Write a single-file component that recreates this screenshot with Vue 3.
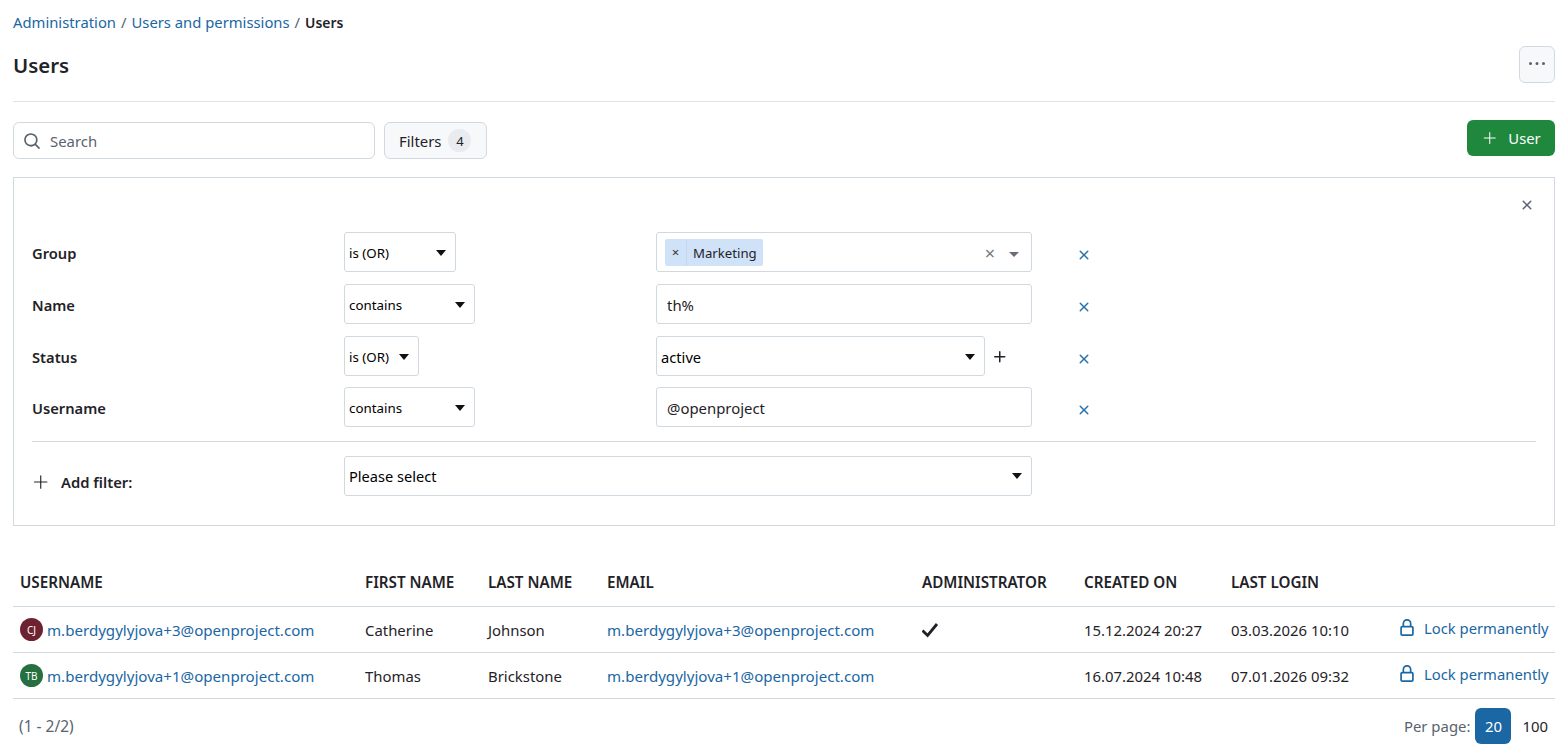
<script setup>
const filters = [
  { label: 'Group', op: 'is (OR)', opWidth: 112 },
  { label: 'Name', op: 'contains', opWidth: 131, text: 'th%' },
  { label: 'Status', op: 'is (OR)', opWidth: 75 },
  { label: 'Username', op: 'contains', opWidth: 131, text: '@openproject' }
]

const columns = [
  { title: 'Username', width: 345 },
  { title: 'First name', width: 123 },
  { title: 'Last name', width: 119 },
  { title: 'Email', width: 315 },
  { title: 'Administrator', width: 162 },
  { title: 'Created on', width: 147 },
  { title: 'Last login', width: 167 },
  { title: '', width: 164 }
]

const users = [
  {
    initials: 'CJ',
    color: '#6e2131',
    login: 'm.berdygylyjova+3@openproject.com',
    first: 'Catherine',
    last: 'Johnson',
    admin: true,
    created: '15.12.2024 20:27',
    lastLogin: '03.03.2026 10:10'
  },
  {
    initials: 'TB',
    color: '#26703f',
    login: 'm.berdygylyjova+1@openproject.com',
    first: 'Thomas',
    last: 'Brickstone',
    admin: false,
    created: '16.07.2024 10:48',
    lastLogin: '07.01.2026 09:32'
  }
]

const plusPath = 'M7.75 2a.75.75 0 0 1 .75.75V7h4.25a.75.75 0 0 1 0 1.5H8.5v4.25a.75.75 0 0 1-1.5 0V8.5H2.75a.75.75 0 0 1 0-1.5H7V2.75A.75.75 0 0 1 7.75 2Z'
const thinPlusPath = 'M7.75 2a.5.5 0 0 1 .5.5v5h5a.5.5 0 0 1 0 1h-5v5a.5.5 0 0 1-1 0v-5h-5a.5.5 0 0 1 0-1h5v-5a.5.5 0 0 1 .5-.5Z'
const closePath = 'M3.72 3.72a.75.75 0 0 1 1.06 0L8 6.94l3.22-3.22a.749.749 0 0 1 1.275.326.749.749 0 0 1-.215.734L9.06 8l3.22 3.22a.749.749 0 0 1-.326 1.275.749.749 0 0 1-.734-.215L8 9.06l-3.22 3.22a.751.751 0 0 1-1.042-.018.751.751 0 0 1-.018-1.042L6.94 8 3.72 4.78a.75.75 0 0 1 0-1.06Z'
const lockPath = 'M4 4a4 4 0 0 1 8 0v2h.25c.966 0 1.75.784 1.75 1.75v5.5A1.75 1.75 0 0 1 12.25 15h-8.5A1.75 1.75 0 0 1 2 13.25v-5.5C2 6.784 2.784 6 3.75 6H4Zm8.25 3.5h-8.5a.25.25 0 0 0-.25.25v5.5c0 .138.112.25.25.25h8.5a.25.25 0 0 0 .25-.25v-5.5a.25.25 0 0 0-.25-.25ZM10.5 6V4a2.5 2.5 0 1 0-5 0v2Z'
</script>

<template>
  <div class="page">
    <nav class="breadcrumb">
      <a href="#">Administration</a>
      <span class="sep">/</span>
      <a href="#">Users and permissions</a>
      <span class="sep">/</span>
      <strong>Users</strong>
    </nav>

    <header class="title-row">
      <h1>Users</h1>
      <button class="more-btn" aria-label="More">
        <svg width="16" height="16" viewBox="0 0 16 16"><path fill="currentColor" d="M8 9a1.5 1.5 0 1 0 0-3 1.5 1.5 0 0 0 0 3ZM1.5 9a1.5 1.5 0 1 0 0-3 1.5 1.5 0 0 0 0 3Zm13 0a1.5 1.5 0 1 0 0-3 1.5 1.5 0 0 0 0 3Z" /></svg>
      </button>
    </header>

    <div class="toolbar">
      <label class="search">
        <svg width="18" height="18" viewBox="0 0 16 16"><path fill="currentColor" d="M10.68 11.74a6 6 0 0 1-7.922-8.982 6 6 0 0 1 8.982 7.922l3.04 3.04a.749.749 0 0 1-.326 1.275.749.749 0 0 1-.734-.215ZM11.5 7a4.499 4.499 0 1 0-8.997 0A4.499 4.499 0 0 0 11.5 7Z" /></svg>
        <input type="text" placeholder="Search" />
      </label>
      <button class="filters-btn">Filters <span class="counter">4</span></button>
      <button class="add-btn">
        <svg width="16" height="16" viewBox="0 0 16 16"><path fill="currentColor" :d="thinPlusPath" /></svg>
        User
      </button>
    </div>

    <section class="filter-box">
      <button class="box-close" aria-label="Close">
        <svg width="16" height="16" viewBox="0 0 16 16"><path fill="currentColor" :d="closePath" /></svg>
      </button>

      <div v-for="filter in filters" :key="filter.label" class="filter-row">
        <label class="filter-label">{{ filter.label }}</label>
        <div class="select small" :style="{ width: filter.opWidth + 'px' }">
          <span>{{ filter.op }}</span><i class="arrow"></i>
        </div>

        <div class="filter-value">
          <div v-if="filter.label === 'Group'" class="multi">
            <span class="tag"><span class="tag-x">×</span><span class="tag-text">Marketing</span></span>
            <span class="multi-clear">×</span>
            <i class="multi-arrow"></i>
          </div>
          <template v-else-if="filter.label === 'Status'">
            <div class="select status-select"><span>active</span><i class="arrow"></i></div>
            <svg class="status-plus" width="16" height="16" viewBox="0 0 16 16"><path fill="currentColor" :d="plusPath" /></svg>
          </template>
          <input v-else class="text-input" type="text" :value="filter.text" />
        </div>

        <button class="row-remove" aria-label="Remove filter">
          <svg width="16" height="16" viewBox="0 0 16 16"><path fill="currentColor" :d="closePath" /></svg>
        </button>
      </div>

      <div class="add-filter">
        <label class="add-label">
          <svg width="18" height="18" viewBox="0 0 16 16"><path fill="currentColor" :d="thinPlusPath" /></svg>
          Add filter:
        </label>
        <div class="select please"><span>Please select</span><i class="arrow"></i></div>
      </div>
    </section>

    <table class="users">
      <colgroup>
        <col v-for="col in columns" :key="col.title" :style="{ width: col.width + 'px' }" />
      </colgroup>
      <thead>
        <tr>
          <th v-for="col in columns" :key="col.title">{{ col.title }}</th>
        </tr>
      </thead>
      <tbody>
        <tr v-for="user in users" :key="user.login">
          <td>
            <div class="user-cell">
              <span class="avatar" :style="{ background: user.color }">{{ user.initials }}</span>
              <a href="#">{{ user.login }}</a>
            </div>
          </td>
          <td>{{ user.first }}</td>
          <td>{{ user.last }}</td>
          <td><a href="#">{{ user.login }}</a></td>
          <td>
            <svg v-if="user.admin" class="check" width="18" height="18" viewBox="0 0 18 18"><path d="M.5 9.5 5.6 14.5 15 3" fill="none" stroke="currentColor" stroke-width="2.8" /></svg>
          </td>
          <td>{{ user.created }}</td>
          <td>{{ user.lastLogin }}</td>
          <td class="action">
            <a href="#">
              <svg width="18" height="18" viewBox="0 0 16 16"><path fill="currentColor" :d="lockPath" /></svg>
              Lock permanently
            </a>
          </td>
        </tr>
      </tbody>
    </table>

    <footer class="pagination">
      <span class="range">(1 - 2/2)</span>
      <div class="per-page">
        <span class="per-label">Per page:</span>
        <span class="page-size current">20</span>
        <span class="page-size">100</span>
      </div>
    </footer>
  </div>
</template>

<style>
html, body {
  margin: 0;
  background: #fff;
}
</style>

<style scoped>
.page {
  padding: 0 10px 0 13px;
  font-family: "Noto Sans", "Open Sans", sans-serif;
  font-size: 14.9px;
  color: #1f2328;
}

a {
  color: #1a67a3;
  text-decoration: none;
}

button {
  font-family: inherit;
  cursor: pointer;
}

.breadcrumb {
  height: 44px;
  display: flex;
  align-items: center;
  gap: 5px;
  font-size: 14.8px;
}

.breadcrumb .sep {
  color: #59636e;
}

.breadcrumb strong {
  font-size: 13.9px;
  font-weight: 600;
}

.title-row {
  height: 58px;
  box-sizing: border-box;
  display: flex;
  align-items: flex-start;
  justify-content: space-between;
  border-bottom: 1px solid #dfe3e8;
}

.title-row h1 {
  margin: 5px 0 0;
  font-size: 20.4px;
  line-height: 32px;
  font-weight: 600;
}

.more-btn {
  width: 36px;
  height: 37px;
  margin-top: 2px;
  padding: 0 0 2px;
  display: flex;
  align-items: center;
  justify-content: center;
  color: #59636e;
  background: #f6f8fa;
  border: 1px solid #d1d9e0;
  border-radius: 6px;
}

.toolbar {
  display: flex;
  align-items: flex-start;
  padding-top: 18px;
  height: 75px;
  box-sizing: border-box;
}

.search {
  width: 362px;
  height: 37px;
  margin-top: 2px;
  box-sizing: border-box;
  display: flex;
  align-items: center;
  gap: 9px;
  padding: 0 9px;
  color: #59636e;
  border: 1px solid #d1d9e0;
  border-radius: 6px;
}

.search input {
  flex: 1;
  min-width: 0;
  border: 0;
  outline: 0;
  padding: 0;
  font: inherit;
}

.search input::placeholder {
  color: #59636e;
}

.filters-btn {
  height: 37px;
  margin: 2px 0 0 9px;
  padding: 0 15px 0 14px;
  display: flex;
  align-items: center;
  gap: 7px;
  font-size: 14.9px;
  color: #1f2328;
  background: #f6f8fa;
  border: 1px solid #d1d9e0;
  border-radius: 6px;
}

.counter {
  width: 23px;
  height: 23px;
  display: flex;
  align-items: center;
  justify-content: center;
  font-size: 13px;
  background: #e8ebef;
  border-radius: 50%;
}

.add-btn {
  width: 88px;
  height: 36px;
  margin-left: auto;
  padding: 0 0 0 1px;
  display: flex;
  align-items: center;
  justify-content: center;
  gap: 10px;
  font-size: 14.8px;
  color: #fff;
  background: #1f883d;
  border: 0;
  border-radius: 6px;
}

.filter-box {
  position: relative;
  height: 349px;
  box-sizing: border-box;
  padding: 54px 18px 0;
  border: 1px solid #d1d9e0;
}

.box-close {
  position: absolute;
  top: 19px;
  right: 19px;
  width: 16px;
  height: 16px;
  padding: 0;
  border: 0;
  background: none;
  color: #59636e;
}

.filter-row {
  display: grid;
  grid-template-columns: 312px 312px 376px 40px;
  align-items: center;
  height: 40px;
  margin-bottom: 11.8px;
}

.filter-label {
  padding-top: 2px;
  font-size: 14.7px;
  font-weight: 600;
}

.select {
  height: 40px;
  box-sizing: border-box;
  display: flex;
  align-items: center;
  justify-content: space-between;
  padding: 2px 9px 0 4px;
  font-size: 13.33px;
  color: #000;
  background: #fff;
  border: 1px solid #d1d9e0;
  border-radius: 3px;
}

.arrow {
  width: 0;
  height: 0;
  border-left: 5.5px solid transparent;
  border-right: 5.5px solid transparent;
  border-top: 6px solid #111;
}

.filter-value {
  display: flex;
  align-items: center;
}

.multi {
  width: 376px;
  height: 40px;
  box-sizing: border-box;
  display: flex;
  align-items: center;
  padding: 0 12px 0 8px;
  border: 1px solid #d1d9e0;
  border-radius: 3px;
}

.tag {
  height: 27px;
  display: flex;
  align-items: center;
  font-size: 13.2px;
  background: #cfe2f8;
  border-radius: 2px;
}

.tag-x {
  width: 21px;
  line-height: 27px;
  text-align: center;
  color: #333;
  border-right: 1px solid #c1d8f2;
}

.tag-text {
  padding: 1px 6px 0;
}

.multi-clear {
  margin: 2px 0 0 auto;
  font-size: 18px;
  line-height: 18px;
  color: #767676;
}

.multi-arrow {
  width: 0;
  height: 0;
  margin: 4px 0 0 14px;
  border-left: 5px solid transparent;
  border-right: 5px solid transparent;
  border-top: 5px solid #6a6f75;
}

.status-select {
  width: 329px;
  font-size: 14.7px;
}

.status-plus {
  margin: 3px 0 0 7px;
  color: #1f2328;
}

.text-input {
  width: 376px;
  height: 40px;
  box-sizing: border-box;
  padding: 2px 10px 0;
  font: inherit;
  color: #1f2328;
  border: 1px solid #d1d9e0;
  border-radius: 3px;
  outline: 0;
}

.row-remove {
  justify-self: start;
  margin: 6px 0 0 44px;
  width: 16px;
  height: 16px;
  padding: 0;
  display: flex;
  color: #2a72ab;
  background: none;
  border: 0;
}

.add-filter {
  display: grid;
  grid-template-columns: 312px 688px;
  align-items: center;
  height: 84px;
  margin-top: 14px;
  padding-top: 14px;
  box-sizing: border-box;
  border-top: 1px solid #d1d9e0;
  align-content: start;
}

.add-label {
  display: flex;
  align-items: center;
  gap: 11px;
  font-size: 14.8px;
  font-weight: 600;
  padding-top: 12px;
}

.please {
  padding-top: 0;
  font-size: 14.6px;
}

.users {
  width: 100%;
  margin-top: 32px;
  table-layout: fixed;
  border-collapse: collapse;
}

.users th {
  height: 48px;
  padding: 0 7px;
  text-align: left;
  font-size: 15.2px;
  font-weight: 600;
  text-transform: uppercase;
  white-space: nowrap;
  border-bottom: 1px solid #d1d9e0;
}

.users td {
  height: 45px;
  padding: 0 7px;
  white-space: nowrap;
  border-bottom: 1px solid #d1d9e0;
}

.users td a {
  font-size: 15.1px;
}

.user-cell {
  display: flex;
  align-items: center;
  gap: 4px;
}

.avatar {
  display: flex;
  align-items: center;
  justify-content: center;
  flex: none;
  width: 23px;
  height: 23px;
  font-size: 10px;
  color: #fff;
  border-radius: 50%;
}

.check {
  display: block;
}

.users td.action a {
  display: inline-flex;
  align-items: center;
  gap: 8px;
  margin-bottom: 1px;
  font-size: 14.8px;
}

.action {
  text-align: right;
}

.pagination {
  display: flex;
  align-items: center;
  justify-content: space-between;
  height: 53px;
  padding: 0 7px 0 6px;
}

.range {
  font-size: 15.5px;
  color: #59636e;
}

.per-page {
  display: flex;
  align-items: center;
}

.per-label {
  margin-right: 5px;
  color: #59636e;
}

.page-size {
  height: 36px;
  display: flex;
  align-items: center;
  justify-content: center;
}

.page-size.current {
  width: 36px;
  margin-right: 11px;
  color: #fff;
  background: #1a67a3;
  border-radius: 6px;
}
</style>
